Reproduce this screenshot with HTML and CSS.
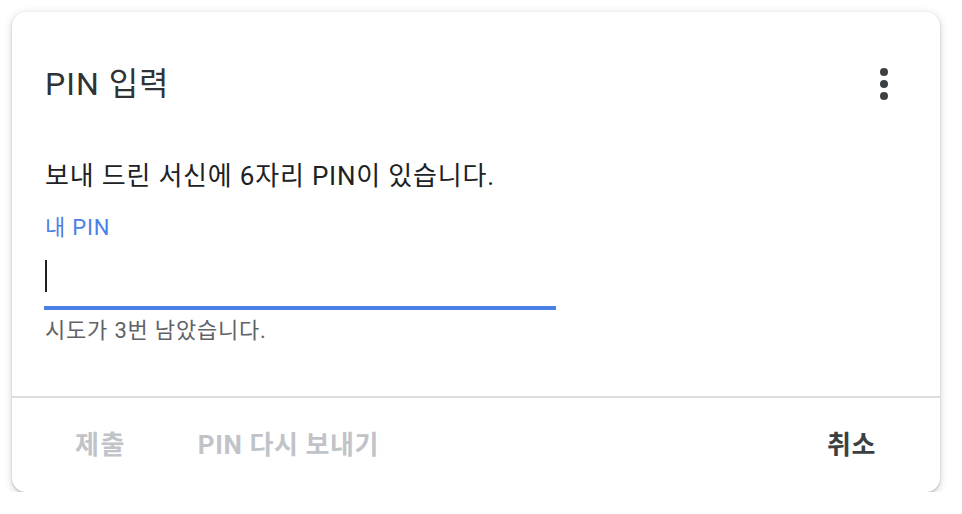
FILE: index.html
```html
<!DOCTYPE html>
<html lang="ko">
<head>
<meta charset="utf-8">
<link rel="stylesheet" href="styles.css">
</head>
<body>
<div class="card">
  <div class="content">
    <div class="header">
      <h1 class="title">PIN 입력</h1>
      <button class="more" aria-label="더보기">
        <svg width="48" height="48" viewBox="0 0 24 24"><circle cx="12" cy="6" r="2"/><circle cx="12" cy="12" r="2"/><circle cx="12" cy="18" r="2"/></svg>
      </button>
    </div>
    <p class="desc">보내 드린 서신에 6자리 PIN이 있습니다.</p>
    <div class="label">내 PIN</div>
    <div class="field"><span class="caret"></span></div>
    <div class="helper">시도가 3번 남았습니다.</div>
  </div>
  <div class="footer">
    <button class="btn disabled first">제출</button>
    <button class="btn disabled">PIN 다시 보내기</button>
    <span class="spacer"></span>
    <button class="btn cancel">취소</button>
  </div>
</div>
</body>
</html>
```

FILE: styles.css
```css
html, body {
  margin: 0;
  padding: 0;
  background: #ffffff;
}
body {
  padding: 12px 22px 0 12px;
  font-family: Roboto, "Noto Sans CJK KR", sans-serif;
  color: #202124;
}
.card {
  width: 928px;
  border-radius: 14px;
  background: #fff;
  box-shadow: 0 1px 2px rgba(60, 64, 67, 0.3), 0 2px 6px 2px rgba(60, 64, 67, 0.15);
}
.content {
  padding: 48px 32px 51px 33px;
}
.header {
  display: flex;
  align-items: center;
  height: 48px;
}
.title {
  flex: 1;
  margin: 0;
  font-size: 32px;
  font-weight: 400;
  letter-spacing: 1px;
  line-height: 48px;
  color: #303336;
}
.more {
  width: 48px;
  height: 48px;
  padding: 0;
  border: 0;
  background: none;
  display: flex;
  align-items: center;
  justify-content: center;
}
.more svg {
  fill: #3c4043;
}
.desc {
  margin: 52px 0 0;
  font-size: 26px;
  letter-spacing: 0.8px;
  line-height: 32px;
  color: #202124;
}
.label {
  margin-top: 22px;
  font-size: 22px;
  letter-spacing: 0.8px;
  line-height: 28px;
  color: #4b80e6;
}
.field {
  width: 512px;
  margin-left: -1px;
  padding: 18px 0 14px;
  border-bottom: 4px solid #4b80e6;
}
.caret {
  display: block;
  width: 2px;
  height: 32px;
  margin-left: 1px;
  background: #202124;
}
.helper {
  margin-top: 7px;
  font-size: 22px;
  letter-spacing: 0.8px;
  line-height: 28px;
  color: #5f6368;
}
.footer {
  display: flex;
  align-items: center;
  height: 94px;
  border-top: 2px solid #dadce0;
  padding: 0 32px;
}
.btn {
  border: 0;
  background: none;
  font-family: Roboto, "Noto Sans CJK KR", sans-serif;
  font-size: 26px;
  font-weight: 700;
  letter-spacing: 0.6px;
  line-height: 32px;
  padding: 0 32px;
}
.btn.first {
  padding-left: 31px;
  margin-right: 8px;
  letter-spacing: 1.5px;
}
.btn.disabled {
  color: #c0c3c8;
}
.btn.cancel {
  color: #3c4043;
}
.spacer {
  flex: 1;
}
```
